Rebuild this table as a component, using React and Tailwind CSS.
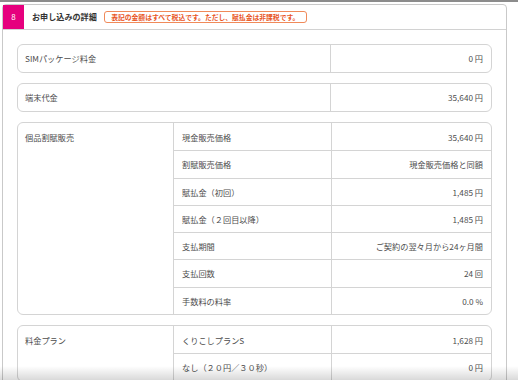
const font = { fontFamily: '"Noto Sans CJK JP", "Noto Sans", sans-serif' };

const groups = [
  { label: 'SIMパッケージ料金', value: '0 円' },
  { label: '端末代金', value: '35,640 円' },
  {
    label: '個品割賦販売',
    rows: [
      ['現金販売価格', '35,640 円'],
      ['割賦販売価格', '現金販売価格と同額'],
      ['賦払金（初回）', '1,485 円'],
      ['賦払金（２回目以降）', '1,485 円'],
      ['支払期間', 'ご契約の翌々月から24ヶ月間'],
      ['支払回数', '24 回'],
      ['手数料の料率', '0.0 %'],
    ],
  },
  {
    label: '料金プラン',
    rows: [
      ['くりこしプランS', '1,628 円'],
      ['なし（２０円／３０秒）', '0 円'],
    ],
  },
];

export default function App() {
  return (
    <div className="relative h-[380px] w-[518px] overflow-hidden border-t-2 border-[#8c8c8c] bg-white text-[#4d4d4d]" style={font}>
      <div className="ml-[2px] mt-[2px] w-[505px] rounded-t-[4px] border border-[#c9c9c9]">
        <div className="flex h-[25px] items-stretch border-b border-[#d2d2d2]">
          <div className="flex w-[21px] items-center justify-center bg-[#e6007e] text-[8px] text-white">8</div>
          <div className="ml-[8px] flex items-center text-[8.1px] font-bold text-[#333]">お申し込みの詳細</div>
          <div className="ml-[7px] flex items-center">
            <span className="flex h-[12px] w-[203px] items-center justify-center rounded-[3px] border border-[#f08a5a] text-[6.8px] font-bold text-[#e8561f]">
              表記の金額はすべて税込です。ただし、賦払金は非課税です。
            </span>
          </div>
        </div>

        <div className="flex flex-col gap-[10px] pl-[14px] pt-[14px] pb-[10px]">
          {groups.map((g) =>
            g.rows ? <GroupCard key={g.label} group={g} /> : <SingleCard key={g.label} label={g.label} value={g.value} />
          )}
        </div>
      </div>
      <div className="pointer-events-none absolute bottom-0 left-0 h-[14px] w-full bg-gradient-to-b from-transparent to-black/15" />
    </div>
  );
}

function SingleCard({ label, value }) {
  return (
    <div className="flex h-[29px] w-[475px] rounded-[6px] border border-[#d4d4d4] text-[8.2px]">
      <div className="flex w-[313px] items-center border-r border-[#d4d4d4] pl-[7px]">{label}</div>
      <div className="flex flex-1 items-center justify-end pr-[8px]">{value}</div>
    </div>
  );
}

function GroupCard({ group }) {
  return (
    <div className="flex w-[475px] rounded-[6px] border border-[#d4d4d4] text-[8.2px]">
      <div className="w-[156px] border-r border-[#d4d4d4] pl-[7px] pt-[8px]">{group.label}</div>
      <div className="flex flex-1 flex-col">
        {group.rows.map(([k, v], i) => (
          <div key={k} className={`flex h-[27.3px] ${i > 0 ? 'border-t border-[#d4d4d4]' : ''}`}>
            <div className="flex w-[158px] items-center border-r border-[#d4d4d4] pl-[8px]">{k}</div>
            <div className="flex flex-1 items-center justify-end pr-[8px]">{v}</div>
          </div>
        ))}
      </div>
    </div>
  );
}
